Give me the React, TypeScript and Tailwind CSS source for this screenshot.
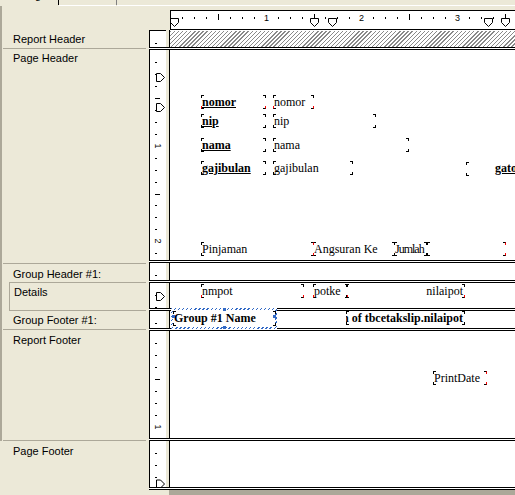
import React from "react";

type Corner = "tl" | "tr" | "bl" | "br";

type FieldDef = {
  x: number;
  y: number;
  w: number;
  h?: number;
  text?: string;
  bold?: boolean;
  u?: boolean;
  right?: boolean;
  tight?: boolean;
  red?: Corner[];
  noBrackets?: boolean;
};

const STEP = 95.67 / 8;

function Brackets({ red = [] }: { red?: Corner[] }) {
  return (
    <>
      <span
        className={`absolute left-0 top-0 w-[3px] h-[3px] border-t border-l border-black ${
          red.includes("tl") ? "border-l-[#ff0000]" : ""
        }`}
      />
      <span
        className={`absolute right-0 top-0 w-[3px] h-[3px] border-t border-r border-black ${
          red.includes("tr") ? "border-r-[#ff0000]" : ""
        }`}
      />
      <span
        className={`absolute left-0 bottom-0 w-[3px] h-[3px] border-b border-l border-black ${
          red.includes("bl") ? "border-l-[#ff0000]" : ""
        }`}
      />
      <span
        className={`absolute right-0 bottom-0 w-[3px] h-[3px] border-b border-r border-black ${
          red.includes("br") ? "border-r-[#ff0000]" : ""
        }`}
      />
    </>
  );
}

function Field({ f, top }: { f: FieldDef; top: number }) {
  return (
    <div
      className="absolute"
      style={{ left: f.x - 170, top: f.y - top, width: f.w, height: f.h ?? 14 }}
    >
      {f.text && (
        <div
          className={`absolute inset-0 whitespace-nowrap text-[12px] leading-[14px] font-['Liberation_Serif','Times_New_Roman',serif] text-black ${
            f.right ? "flex justify-end pr-[2px] overflow-hidden" : "pl-px overflow-visible"
          } ${f.bold ? "font-bold" : ""} ${f.tight ? "tracking-[-1px]" : ""}`}
        >
          <span className={`shrink-0 ${f.u ? "underline" : ""}`}>{f.text}</span>
        </div>
      )}
      {!f.noBrackets && <Brackets red={f.red} />}
    </div>
  );
}

function HRuler() {
  const items: React.ReactNode[] = [];
  for (let k = 1; k <= 29; k++) {
    const X = Math.round(170 + k * STEP);
    const lx = X - 171;
    if (k % 8 === 0) {
      items.push(
        <text
          key={k}
          x={lx + 0.5}
          y={9.5}
          fontSize="9"
          textAnchor="middle"
          fontFamily="'Liberation Sans', Arial, sans-serif"
          fill="#000"
        >
          {k / 8}
        </text>
      );
    } else if (k % 4 === 0) {
      items.push(<rect key={k} x={lx} y={3} width={1} height={6} fill="#000" />);
    } else {
      items.push(<rect key={k} x={lx} y={6} width={1} height={2} fill="#000" />);
    }
  }
  const markers = [174, 314, 332, 488, 505];
  return (
    <svg width="344" height="18" className="block">
      {items}
      {markers.map((cx) => {
        const c = cx - 171 + 0.5;
        return (
          <polygon
            key={cx}
            points={`${c - 4},7.5 ${c + 4},7.5 ${c + 4},11.5 ${c},15.5 ${c - 4},11.5`}
            fill="#fff"
            stroke="#000"
            strokeWidth="1"
          />
        );
      })}
    </svg>
  );
}

function VTicks({ h, markers = [] }: { h: number; markers?: number[] }) {
  const items: React.ReactNode[] = [];
  for (let k = 1; k * STEP < h - 1; k++) {
    const ly = Math.round(k * STEP);
    if (k % 8 === 0) {
      items.push(
        <text
          key={k}
          x={8}
          y={ly}
          transform={`rotate(90 8 ${ly})`}
          fontSize="9"
          textAnchor="middle"
          dominantBaseline="central"
          fontFamily="'Liberation Sans', Arial, sans-serif"
          fill="#000"
        >
          {k / 8}
        </text>
      );
    } else if (k % 4 === 0) {
      items.push(<rect key={k} x={5} y={ly} width={5} height={1} fill="#000" />);
    } else {
      items.push(<rect key={k} x={5} y={ly} width={2} height={1} fill="#000" />);
    }
  }
  return (
    <svg width="16" height={h} className="block">
      {items}
      {markers.map((c) => (
        <polygon
          key={c}
          points={`6.5,${c - 4} 10.5,${c - 4} 14.5,${c} 10.5,${c + 4} 6.5,${c + 4}`}
          fill="#fff"
          stroke="#000"
          strokeWidth="1"
        />
      ))}
    </svg>
  );
}

function Section({
  hCls,
  h,
  markers,
  topBorder,
  visible,
  children,
}: {
  hCls: string;
  h: number;
  markers?: number[];
  topBorder?: boolean;
  visible?: boolean;
  children?: React.ReactNode;
}) {
  return (
    <div className={`flex ${hCls}`}>
      <div
        className={`w-[17px] h-full border-l border-black bg-white overflow-hidden ${
          topBorder ? "border-t" : ""
        }`}
      >
        <VTicks h={h} markers={markers} />
      </div>
      <div className="w-[3px] h-full bg-[#ECE9D8]" />
      <div className="w-px h-full bg-black" />
      <div
        className={`relative flex-1 h-full bg-white ${
          visible ? "overflow-visible z-10" : "overflow-hidden"
        }`}
      >
        {children}
      </div>
    </div>
  );
}

function Sep() {
  return <div className="h-[3px] border-y border-black bg-white" />;
}

const PH: FieldDef[] = [
  { x: 201, y: 95, w: 65, text: "nomor", bold: true, u: true, red: ["bl", "br"] },
  { x: 273, y: 95, w: 41, text: "nomor", red: ["bl", "br"] },
  { x: 201, y: 114, w: 65, text: "nip", bold: true, u: true },
  { x: 273, y: 114, w: 103, text: "nip" },
  { x: 201, y: 138, w: 65, text: "nama", bold: true, u: true },
  { x: 273, y: 138, w: 136, text: "nama" },
  { x: 201, y: 161, w: 65, text: "gajibulan", bold: true, u: true },
  { x: 273, y: 161, w: 80, text: "gajibulan" },
  { x: 466, y: 162, w: 120 },
  { x: 494, y: 161, w: 40, text: "gato", bold: true, u: true, noBrackets: true },
  { x: 201, y: 242, w: 113, text: "Pinjaman" },
  { x: 313, y: 242, w: 82, text: "Angsuran Ke", red: ["tl", "bl"] },
  { x: 394, y: 242, w: 33, text: "Jumlah", tight: true },
  { x: 427, y: 242, w: 79, red: ["tr", "br"] },
];

const DET: FieldDef[] = [
  { x: 201, y: 284, w: 103, text: "nmpot", red: ["bl", "br"] },
  { x: 313, y: 284, w: 35, text: "potke", red: ["bl", "br"] },
  { x: 346, y: 284, w: 119, text: "nilaipot", right: true, red: ["br"] },
];

const GF: FieldDef[] = [
  { x: 173, y: 311, w: 103, h: 15, text: "Group #1 Name", bold: true },
  { x: 346, y: 311, w: 119, text: "Sum of tbcetakslip.nilaipot", bold: true, right: true },
];

const RF: FieldDef[] = [
  { x: 433, y: 371, w: 54, text: "PrintDate", red: ["tr", "br"] },
];

function LeftPanel() {
  const label = "text-[11px] leading-[13px] text-black whitespace-nowrap";
  return (
    <div className="w-[149px] flex flex-col">
      <div className="border-l-2 border-[#ACA899] flex flex-col">
        <div className="h-[25px]" />
        <div className="h-[18px] ml-px mr-[3px] border-b border-[#ACA899] pl-[10px] pt-[2px]">
          <div className={label}>Report Header</div>
        </div>
        <div className="h-[215px] ml-px mr-[3px] border-b border-[#ACA899] pl-[10px] pt-[3px]">
          <div className={label}>Page Header</div>
        </div>
        <div className="h-[19px] ml-[7px] mr-[3px] border-b border-[#ACA899] pl-[4px] pt-[4px]">
          <div className={label}>Group Header #1:</div>
        </div>
        <div className="h-[28px] ml-[7px] mr-[3px] border-b border-l border-[#ACA899] pl-[4px] pt-[3px]">
          <div className={label}>Details</div>
        </div>
        <div className="h-[19px] ml-px mr-[3px] border-b border-[#ACA899] pl-[10px] pt-[3px]">
          <div className={label}>Group Footer #1:</div>
        </div>
        <div className="h-[111px] ml-px mr-[3px] border-b border-[#ACA899] pl-[10px] pt-[4px]">
          <div className={label}>Report Footer</div>
        </div>
      </div>
      <div className="flex-1 pl-[13px] pt-[4px]">
        <div className={label}>Page Footer</div>
      </div>
    </div>
  );
}

function TabStrip() {
  return (
    <div className="flex h-[6px]">
      <div className="w-[58px] h-[6px] overflow-hidden">
        <div className="-mt-[11px] pl-[13px] text-[11px] leading-[13px] text-black">Design</div>
      </div>
      <div className="w-px h-[5px] bg-[#000]" />
      <div className="w-[57px] h-[6px] border-b border-white" />
      <div className="w-px h-[5px] bg-[#808080]" />
      <div className="flex-1 h-[6px] border-b border-white" />
    </div>
  );
}

function RightPane() {
  return (
    <div className="w-[366px] flex flex-col">
      <div className="flex h-[24px]">
        <div className="w-[21px]" />
        <div className="mt-[4px] h-[20px] flex-1 border-t border-l border-b border-black bg-white overflow-hidden">
          <HRuler />
        </div>
      </div>
      <Section hCls="h-[17px]" h={16} topBorder>
        <div className="mt-px h-[16px] bg-[repeating-linear-gradient(135deg,#8a8a8a_0px,#8a8a8a_1px,#ffffff_1px,#ffffff_2.9px)]" />
      </Section>
      <Sep />
      <Section hCls="h-[210px]" h={210} markers={[27.5, 57.5]}>
        {PH.map((f, i) => (
          <Field key={i} f={f} top={50} />
        ))}
      </Section>
      <Sep />
      <Section hCls="h-[17px]" h={17} />
      <Sep />
      <Section hCls="h-[25px]" h={25} markers={[13.5]}>
        {DET.map((f, i) => (
          <Field key={i} f={f} top={283} />
        ))}
      </Section>
      <Sep />
      <Section hCls="h-[17px]" h={17} visible>
        <div className="absolute left-[1px] top-[-3px] w-[106px] h-[21px] bg-[repeating-linear-gradient(135deg,#3169c6_0px,#3169c6_1px,#ffffff_1px,#ffffff_2.9px)]">
          <div className="absolute inset-[2px] bg-white" />
        </div>
        {GF.map((f, i) => (
          <Field key={i} f={f} top={311} />
        ))}
        <div className="absolute left-[2px] top-[4px] w-[3px] h-[3px] bg-[#3169c6]" />
        <div className="absolute left-[53px] top-[-3px] w-[3px] h-[3px] bg-[#3169c6]" />
        <div className="absolute left-[53px] top-[15px] w-[3px] h-[3px] bg-[#3169c6]" />
        <div className="absolute left-[103px] top-[4px] w-[3px] h-[3px] bg-[#3169c6]" />
      </Section>
      <Sep />
      <Section hCls="h-[107px]" h={107}>
        {RF.map((f, i) => (
          <Field key={i} f={f} top={331} />
        ))}
      </Section>
      <Sep />
      <Section hCls="h-[46px]" h={46} markers={[43]} />
      <Sep />
      <div className="flex h-[5px]">
        <div className="w-[20px] bg-[#ECE9D8]" />
        <div className="flex-1 bg-[#ACA899]" />
      </div>
    </div>
  );
}

export default function App() {
  return (
    <div className="w-[515px] h-[495px] overflow-hidden bg-[#ECE9D8] flex flex-col font-['Liberation_Sans',Arial,sans-serif]">
      <TabStrip />
      <div className="flex flex-1">
        <LeftPanel />
        <RightPane />
      </div>
    </div>
  );
}
